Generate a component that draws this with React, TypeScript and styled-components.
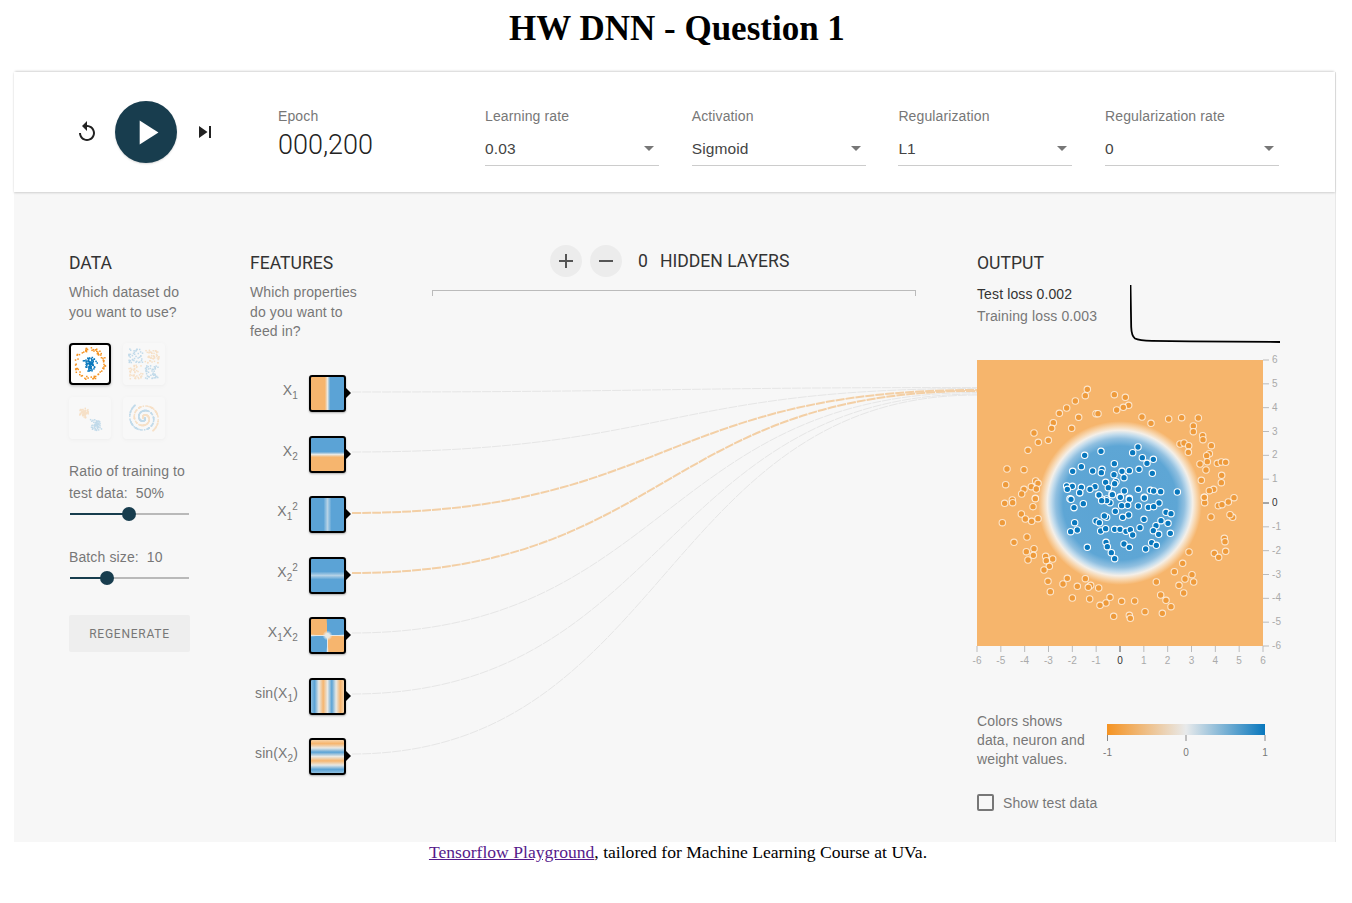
import React from "react";
import styled, { createGlobalStyle } from "styled-components";

const ORANGE = "#f6b56c";
const sans = `"Liberation Sans", Arial, sans-serif`;

const Global = createGlobalStyle`
  html, body { margin: 0; padding: 0; background: #fff; }
  body { font-family: "Liberation Serif", serif; color: #000; }
`;

const Page = styled.div`
  width: 1352px;
  height: 903px;
  overflow: hidden;
`;
const Title = styled.h1`
  margin: 0;
  height: 72px;
  box-sizing: border-box;
  padding: 9px 0 0 2px;
  text-align: center;
  font: bold 35px/40px "Liberation Serif", serif;
`;
const Panel = styled.div`
  position: relative;
  margin: 0 17px 0 14px;
  width: 1321px;
  height: 770px;
  background: #f7f7f7;
  border-right: 1px solid #e8e8e8;
  box-sizing: content-box;
  font-family: ${sans};
  letter-spacing: .12px;
`;
const TopBar = styled.header`
  height: 120px;
  box-sizing: border-box;
  background: #fff;
  box-shadow: 0 1px 2px rgba(0,0,0,.16), 0 -2px 2px -1px rgba(0,0,0,.16);
  display: flex;
  align-items: center;
  padding-left: 61px;
`;
const IconButton = styled.button`
  border: 0;
  background: none;
  padding: 0;
  width: 24px;
  height: 24px;
  display: flex;
  align-items: center;
  justify-content: center;
  color: #222;
`;
const PlayButton = styled.button`
  width: 62px;
  height: 62px;
  border: 0;
  padding: 0;
  margin: 0 16px;
  border-radius: 50%;
  background: #183d4e;
  display: flex;
  align-items: center;
  justify-content: center;
  box-shadow: 0 1px 2px rgba(0,0,0,.15);
`;
const EpochBlock = styled.div`
  margin-left: 61px;
  width: 207px;
  height: 64px;
  padding-top: 8px;
  box-sizing: border-box;
`;
const FieldLabel = styled.div`
  font-size: 14px;
  line-height: 16px;
  color: #777;
`;
const EpochValue = styled.div`
  font-family: Roboto, sans-serif;
  font-weight: 300;
  font-size: 27px;
  line-height: 30px;
  margin-top: 6px;
  color: #222;
  letter-spacing: 0;
`;
const Selects = styled.div`
  display: grid;
  grid-template-columns: repeat(4, 174px);
  column-gap: 32.7px;
`;
const Field = styled.div`
  height: 64px;
  padding-top: 8px;
  box-sizing: border-box;
`;
const SelectBox = styled.div`
  margin-top: 10px;
  height: 32px;
  border-bottom: 1px solid #ccc;
  display: flex;
  align-items: center;
  justify-content: space-between;
  font-size: 15.5px;
  color: #444;
  padding-bottom: 2px;
  box-sizing: border-box;
  &::after {
    content: "";
    margin-right: 5px;
    border-left: 5px solid transparent;
    border-right: 5px solid transparent;
    border-top: 5px solid #777;
  }
`;
const Main = styled.main`
  position: relative;
  height: 650px;
  box-sizing: border-box;
  padding: 60px 0 0 55px;
  display: grid;
  grid-template-columns: 181px 727px 303px;
  align-items: start;
`;
const Heading = styled.h4`
  margin: 0;
  font: 400 17.6px/22px Roboto, sans-serif;
  letter-spacing: 0;
  color: #333;
  text-transform: uppercase;
`;
const Help = styled.p`
  margin: 9px 0 0;
  font-size: 14px;
  line-height: 19.5px;
  color: #777;
`;
const DataCol = styled.section`
  display: flex;
  flex-direction: column;
  width: 121px;
`;
const Datasets = styled.div`
  margin-top: 21px;
  display: grid;
  grid-template-columns: 42px 42px;
  grid-auto-rows: 42px;
  column-gap: 12px;
  row-gap: 12px;
`;
const Thumb = styled.div<{ $selected?: boolean }>`
  box-sizing: border-box;
  border: 2px solid ${(p) => (p.$selected ? "#000" : "transparent")};
  border-radius: 4px;
  background: #fff;
  opacity: ${(p) => (p.$selected ? 1 : 0.22)};
  box-shadow: 0 1px 3px rgba(0,0,0,${(p) => (p.$selected ? 0.25 : 0.15)});
  svg { display: block; width: 100%; height: 100%; }
`;
const SliderLabel = styled.div<{ $top: number }>`
  margin-top: ${(p) => p.$top}px;
  font-size: 14px;
  line-height: 22px;
  color: #777;
  white-space: pre;
`;
const Track = styled.div`
  position: relative;
  margin: 9px 0 0 1px;
  width: 119px;
  height: 2px;
  background: #b9b9b9;
`;
const TrackFill = styled.div`
  position: absolute;
  left: 0;
  top: 0;
  height: 2px;
  background: #183d4e;
`;
const TrackThumb = styled.div`
  position: absolute;
  top: -6px;
  width: 14px;
  height: 14px;
  margin-left: -7px;
  border-radius: 50%;
  background: #183d4e;
`;
const Regenerate = styled.button`
  margin-top: 36px;
  width: 121px;
  height: 37px;
  border: 0;
  padding: 0;
  border-radius: 2px;
  background: #eeeeee;
  color: #777;
  font: 400 12px Roboto, sans-serif;
  letter-spacing: .75px;
  text-transform: uppercase;
`;
const NetCol = styled.section`
  display: grid;
  grid-template-columns: 181px 1fr;
  position: relative;
`;
const FeatureIntro = styled.div`
  width: 120px;
`;
const Layers = styled.div`
  display: flex;
  flex-direction: column;
  align-items: stretch;
`;
const LayerControls = styled.div`
  display: flex;
  align-items: center;
  height: 32px;
  margin: -7px 0 0 119px;
`;
const RoundButton = styled.button`
  width: 32px;
  height: 32px;
  margin-right: 8px;
  padding: 0;
  border: 0;
  border-radius: 50%;
  background: #ececec;
  color: #555;
  display: flex;
  align-items: center;
  justify-content: center;
`;
const LayerCount = styled.span`
  font: 400 17.6px/22px Roboto, sans-serif;
  letter-spacing: 0;
  color: #333;
  margin-left: 8px;
`;
const LayerText = styled.span`
  font: 400 17.6px/22px Roboto, sans-serif;
  letter-spacing: 0;
  color: #333;
  margin-left: 12px;
  white-space: nowrap;
`;
const Bracket = styled.div`
  margin: 13px 0 0 1px;
  width: 484px;
  height: 6px;
  box-sizing: border-box;
  border: 1px solid #bbb;
  border-bottom: 0;
`;
const Features = styled.div`
  grid-column: 1 / 3;
  margin-top: 33.5px;
  width: 100px;
  display: flex;
  flex-direction: column;
  position: relative;
  z-index: 1;
`;
const FeatureRow = styled.div`
  height: 60.5px;
  display: flex;
  align-items: flex-start;
`;
const FeatureLabel = styled.div`
  width: 48px;
  margin-right: 11px;
  height: 30px;
  text-align: right;
  font-size: 14px;
  line-height: 30px;
  color: #777;
  white-space: nowrap;
  direction: rtl;
  unicode-bidi: plaintext;
  sub, sup { font-size: 10px; line-height: 0; }
`;
const NodeBox = styled.div<{ $bg: string }>`
  position: relative;
  flex: none;
  width: 37px;
  height: 37px;
  box-sizing: border-box;
  border: 2px solid #000;
  border-radius: 3px;
  background: ${(p) => p.$bg};
  box-shadow: 0 1px 2px rgba(0,0,0,.3);
  &::after {
    content: "";
    position: absolute;
    right: -7px;
    top: 11px;
    border-left: 5px solid #000;
    border-top: 5px solid transparent;
    border-bottom: 5px solid transparent;
  }
`;
const Links = styled.svg`
  position: absolute;
  left: 0;
  top: 0;
  width: 1321px;
  height: 650px;
  pointer-events: none;
`;
const OutputCol = styled.section`
  position: relative;
  z-index: 2;
  width: 303px;
  display: flex;
  flex-direction: column;
`;
const LossRow = styled.div`
  display: flex;
  justify-content: space-between;
  height: 75px;
  margin-top: 1px;
`;
const LossText = styled.div<{ $muted?: boolean }>`
  font-size: 14px;
  line-height: 22px;
  color: ${(p) => (p.$muted ? "#777" : "#333")};
`;
const Losses = styled.div`
  padding-top: 8px;
`;
const LossChart = styled.svg`
  display: block;
  margin-top: 10px;
  width: 150px;
  height: 60px;
`;
const Plot = styled.svg`
  display: block;
  width: 303px;
  height: 320px;
  overflow: visible;
`;
const Legend = styled.div`
  margin-top: 42px;
  display: flex;
  align-items: flex-start;
`;
const LegendText = styled.div`
  width: 130px;
  font-size: 14px;
  line-height: 19px;
  color: #777;
`;
const LegendChart = styled.svg`
  display: block;
  margin-top: 12px;
  width: 173px;
  height: 50px;
  overflow: visible;
`;
const CheckRow = styled.label`
  display: flex;
  align-items: center;
  gap: 9px;
  margin-top: 20px;
  font-size: 14px;
  color: #777;
`;
const CheckBox = styled.span`
  width: 17px;
  height: 17px;
  box-sizing: border-box;
  border: 2px solid #777;
  border-radius: 2px;
`;
const Footer = styled.footer`
  height: 61px;
  text-align: center;
  padding: 0 0 0 4px;
  font: 17.6px/20px "Liberation Serif", serif;
  a { color: #551a8b; }
`;

const o5 = [[352,328],[346,347],[316,363],[290,384],[268,400],[250,428],[245,445],[326,412],[305,445],[378,401],[384,401],[433,344],[466,352],[476,376],[460,382],[440,390],[516,411],[543,430],[596,417],[635,413],[685,414],[670,438],[670,455],[698,467],[699,479],[724,497],[630,492],[642,489],[656,497],[655,517],[718,521],[710,527],[712,545],[690,552],[742,550],[754,546],[767,547],[708,570],[755,586],[754,608],[694,601],[731,628],[718,632],[703,652],[792,653],[192,459],[205,487],[235,481],[174,511],[111,567],[162,569],[107,614],[197,603],[204,610],[184,620],[199,627],[162,628],[155,642],[196,655],[127,660]];
const o6 = [[196,26],[104,40],[128,38],[189,50],[154,72],[166,87],[185,94],[204,86],[97,98],[171,141],[132,157],[192,176],[169,185],[190,196],[174,210],[227,199],[229,212],[248,207],[238,229],[222,240],[292,265],[279,282],[234,274],[322,289],[241,305],[346,266],[362,286],[355,292],[386,294],[307,324],[359,327],[420,322],[408,339],[390,346],[455,334],[494,333],[431,379],[478,376],[481,385],[525,365],[577,370],[559,276],[572,315],[588,331],[603,350],[627,286],[641,309],[645,267],[666,254],[671,276],[613,245],[638,220],[657,186],[733,190],[746,202],[767,184],[763,145],[765,155],[723,81],[788,82],[780,74],[704,38],[703,22],[745,47],[756,44],[775,36]];
const b5 = [[504,501],[488,518],[517,533],[550,538],[531,550],[393,514],[344,526],[433,551],[334,560],[308,574],[368,573],[396,568],[394,578],[432,584],[456,574],[478,572],[507,568],[462,593],[547,580],[407,607],[438,605],[434,611],[290,618],[307,619],[334,622],[292,628],[375,620],[360,628],[329,638],[415,623],[386,645],[426,643],[463,633],[505,628],[541,631],[551,633],[572,635],[622,636],[450,651],[478,655],[523,652],[300,656],[410,657],[395,657]];
const b6 = [[303,28],[312,53],[329,8],[340,41],[387,15],[420,38],[427,14],[410,32],[395,32],[451,22],[478,28],[523,24],[567,39],[535,52],[551,50],[505,48],[473,46],[455,47],[436,64],[476,75],[458,82],[410,82],[403,78],[378,93],[388,98],[522,88],[588,67],[603,71],[594,100],[573,92],[558,107],[314,98],[302,125],[322,120],[392,123],[407,116],[434,118],[450,118],[468,124],[481,119],[488,135],[510,113],[550,122],[601,130],[566,133],[352,172],[408,157],[412,170],[424,188],[434,206],[462,162],[478,172],[527,177],[545,158],[559,166]];

// pixel coordinates inside the plot svg (origin at page 977,350)
const from5 = (p: number[]) => [p[0] / 3 + 970 - 977, p[1] / 3 + 280 - 350];
const from6 = (p: number[]) => [p[0] / 3 + 970 - 977, p[1] / 3 + 490 - 350];
const orangeDots = [...o5.map(from5), ...o6.map(from6)];
const blueDots = [...b5.map(from5), ...b6.map(from6)];

const TICKS = [-6,-5,-4,-3,-2,-1,0,1,2,3,4,5,6];

function OutputPlot() {
  const size = 286;
  const top = 10;
  return (
    <Plot viewBox="0 0 303 320">
      <defs>
        <radialGradient id="disc" gradientUnits="userSpaceOnUse" cx={143} cy={top + 143} r={92}>
          <stop offset="0" stopColor="#5aa3d3" />
          <stop offset="0.62" stopColor="#5ea6d5" />
          <stop offset="0.7" stopColor="#8fbfe0" />
          <stop offset="0.75" stopColor="#c5dded" />
          <stop offset="0.79" stopColor="#f4efe8" />
          <stop offset="0.83" stopColor="#f8d9b4" />
          <stop offset="0.89" stopColor={ORANGE} />
          <stop offset="1" stopColor={ORANGE} />
        </radialGradient>
      </defs>
      <rect x={0} y={top} width={size} height={size} fill={ORANGE} />
      <circle cx={143} cy={top + 143} r={92} fill="url(#disc)" />
      {orangeDots.map(([x, y], i) => (
        <circle key={i} cx={x} cy={y} r={3.2} fill="#ee9a3a" stroke="#fff" strokeOpacity={0.7} strokeWidth={1.1} />
      ))}
      {blueDots.map(([x, y], i) => (
        <circle key={i} cx={x} cy={y} r={3.2} fill="#0877bd" stroke="#fff" strokeWidth={1.1} />
      ))}
      {TICKS.map((t) => {
        const d = ((t + 6) / 12) * size;
        const dark = t === 0;
        const c = dark ? "#555" : "#bbb";
        return (
          <g key={t} fontFamily={sans} fontSize={10} fill={dark ? "#333" : "#aaa"}>
            <line x1={d} x2={d} y1={top + size} y2={top + size + 6} stroke={c} />
            <text x={d} y={top + size + 18} textAnchor="middle">{t}</text>
            <line x1={size} x2={size + 6} y1={top + size - d} y2={top + size - d} stroke={c} />
            <text x={size + 9} y={top + size - d + 3}>{t}</text>
          </g>
        );
      })}
    </Plot>
  );
}

function seeded(seed: number) {
  let s = seed;
  return () => {
    s = (s * 16807) % 2147483647;
    return s / 2147483647;
  };
}

function datasetDots(kind: string) {
  const r = seeded(kind.length * 7919 + 13);
  const pts: { x: number; y: number; c: string }[] = [];
  const BL = "#0877bd";
  const OR = "#f59322";
  if (kind === "circle") {
    for (let i = 0; i < 70; i++) {
      const a = r() * 6.283;
      const d = 12.5 + r() * 3.8;
      pts.push({ x: 19 + Math.cos(a) * d, y: 19 + Math.sin(a) * d, c: OR });
    }
    for (let i = 0; i < 80; i++) {
      const a = r() * 6.283;
      const d = r() * 7.5;
      pts.push({ x: 19 + Math.cos(a) * d, y: 19 + Math.sin(a) * d, c: BL });
    }
  } else if (kind === "xor") {
    for (let i = 0; i < 200; i++) {
      const x = 4 + r() * 30;
      const y = 4 + r() * 30;
      if (Math.abs(x - 19) < 1.2 || Math.abs(y - 19) < 1.2) continue;
      pts.push({ x, y, c: (x - 19) * (y - 19) < 0 ? OR : BL });
    }
  } else if (kind === "gauss") {
    for (let i = 0; i < 60; i++) {
      pts.push({ x: 13 + (r() + r() - 1) * 5, y: 14 + (r() + r() - 1) * 6, c: OR });
      pts.push({ x: 25 + (r() + r() - 1) * 6, y: 26 + (r() + r() - 1) * 6, c: BL });
    }
  } else {
    for (let i = 0; i < 160; i++) {
      const t = r() * 10.5;
      const d = t * 1.45 + 0.5;
      pts.push({ x: 19 + Math.cos(t) * d, y: 19 + Math.sin(t) * d, c: BL });
      pts.push({ x: 19 - Math.cos(t) * d, y: 19 - Math.sin(t) * d, c: OR });
    }
  }
  return pts;
}

function DatasetThumb({ kind, selected }: { kind: string; selected?: boolean }) {
  return (
    <Thumb $selected={selected}>
      <svg viewBox="0 0 38 38">
        {datasetDots(kind).map((p, i) => (
          <rect key={i} x={p.x - 0.75} y={p.y - 0.75} width={1.5} height={1.5} fill={p.c} />
        ))}
      </svg>
    </Thumb>
  );
}

const O = "#f6b56e";
const B = "#5ba3d6";
const W = "#e8e8e4";

const FEATURES: { label: React.ReactNode; bg: string }[] = [
  { label: <>X<sub>1</sub></>, bg: `linear-gradient(90deg, ${O} 42%, ${W} 50%, ${B} 58%)` },
  { label: <>X<sub>2</sub></>, bg: `linear-gradient(180deg, ${B} 42%, ${W} 50%, ${O} 58%)` },
  { label: <>X<sub>1</sub><sup>2</sup></>, bg: `linear-gradient(90deg, ${B} 38%, #b5d2e6 50%, ${B} 62%)` },
  { label: <>X<sub>2</sub><sup>2</sup></>, bg: `linear-gradient(180deg, ${B} 38%, #b5d2e6 50%, ${B} 62%)` },
  {
    label: <>X<sub>1</sub>X<sub>2</sub></>,
    bg: `radial-gradient(circle at 50% 50%, ${W} 0 2px, transparent 5px), conic-gradient(${B} 0 85deg, ${W} 90deg, ${O} 95deg 175deg, ${W} 180deg, ${B} 185deg 265deg, ${W} 270deg, ${O} 275deg 355deg, ${B} 360deg)`,
  },
  { label: <>sin(X<sub>1</sub>)</>, bg: `linear-gradient(90deg, #8fbfdf 0%, ${B} 11%, ${W} 24%, ${O} 37%, ${W} 50%, ${B} 63%, ${W} 76%, ${O} 89%, #f7d3a8 100%)` },
  { label: <>sin(X<sub>2</sub>)</>, bg: `linear-gradient(180deg, #f7d3a8 0%, ${O} 11%, ${W} 24%, ${B} 37%, ${W} 50%, ${O} 63%, ${W} 76%, ${B} 89%, #8fbfdf 100%)` },
];

// link geometry is page coordinates less the Main origin (14,192)
const LINK_Y = [392, 452, 513, 573, 633, 694, 754];
const END_Y = [387.5, 388.5, 390, 391, 392.5, 394, 395];

function NetworkLinks() {
  return (
    <Links viewBox="0 0 1321 650">
      {LINK_Y.map((y, i) => {
        const x0 = 338;
        const y0 = y - 192;
        const x1 = 963;
        const y1 = END_Y[i] - 192;
        const m = (x0 + x1) / 2;
        const strong = i === 2 || i === 3;
        return (
          <path
            key={i}
            d={`M${x0} ${y0}C${m} ${y0} ${m} ${y1} ${x1} ${y1}`}
            fill="none"
            stroke={strong ? "#f3cfa5" : "#e6e6e6"}
            strokeWidth={strong ? 2 : 1}
            strokeDasharray="9 1"
          />
        );
      })}
    </Links>
  );
}

export default function App() {
  return (
    <Page>
      <Global />
      <Title>HW DNN - Question 1</Title>
      <Panel>
        <TopBar>
          <IconButton aria-label="Reset">
            <svg width="24" height="24" viewBox="0 0 24 24" fill="currentColor">
              <path d="M12 5V1L7 6l5 5V7c3.31 0 6 2.69 6 6s-2.69 6-6 6-6-2.69-6-6H4c0 4.42 3.58 8 8 8s8-3.58 8-8-3.58-8-8-8z" />
            </svg>
          </IconButton>
          <PlayButton aria-label="Play">
            <svg width="41" height="41" viewBox="0 0 24 24" fill="#fff">
              <path d="M8 5v14l11-7z" />
            </svg>
          </PlayButton>
          <IconButton aria-label="Step">
            <svg width="24" height="24" viewBox="0 0 24 24" fill="currentColor">
              <path d="M6 18l8.5-6L6 6v12zM16 6v12h2V6h-2z" />
            </svg>
          </IconButton>
          <EpochBlock>
            <FieldLabel>Epoch</FieldLabel>
            <EpochValue>000,200</EpochValue>
          </EpochBlock>
          <Selects>
            {[["Learning rate", "0.03"], ["Activation", "Sigmoid"], ["Regularization", "L1"], ["Regularization rate", "0"]].map(([l, v]) => (
              <Field key={l}>
                <FieldLabel>{l}</FieldLabel>
                <SelectBox>{v}</SelectBox>
              </Field>
            ))}
          </Selects>
        </TopBar>
        <Main>
          <NetworkLinks />
          <DataCol>
            <Heading>Data</Heading>
            <Help>Which dataset do<br />you want to use?</Help>
            <Datasets>
              <DatasetThumb kind="circle" selected />
              <DatasetThumb kind="xor" />
              <DatasetThumb kind="gauss" />
              <DatasetThumb kind="spiral" />
            </Datasets>
            <SliderLabel $top={21}>{"Ratio of training to\ntest data:  50%"}</SliderLabel>
            <Track>
              <TrackFill style={{ width: 59 }} />
              <TrackThumb style={{ left: 59 }} />
            </Track>
            <SliderLabel $top={31}>Batch size:  10</SliderLabel>
            <Track>
              <TrackFill style={{ width: 37 }} />
              <TrackThumb style={{ left: 37 }} />
            </Track>
            <Regenerate>Regenerate</Regenerate>
          </DataCol>
          <NetCol>
            <FeatureIntro>
              <Heading>Features</Heading>
              <Help>Which properties<br />do you want to<br />feed in?</Help>
            </FeatureIntro>
            <Layers>
              <LayerControls>
                <RoundButton aria-label="Add layer">
                  <svg width="24" height="24" viewBox="0 0 24 24" fill="currentColor"><path d="M19 13h-6v6h-2v-6H5v-2h6V5h2v6h6v2z" /></svg>
                </RoundButton>
                <RoundButton aria-label="Remove layer">
                  <svg width="24" height="24" viewBox="0 0 24 24" fill="currentColor"><path d="M19 13H5v-2h14v2z" /></svg>
                </RoundButton>
                <LayerCount>0</LayerCount>
                <LayerText>HIDDEN LAYERS</LayerText>
              </LayerControls>
              <Bracket />
            </Layers>
            <Features>
              {FEATURES.map((f, i) => (
                <FeatureRow key={i}>
                  <FeatureLabel>{f.label}</FeatureLabel>
                  <NodeBox $bg={f.bg} />
                </FeatureRow>
              ))}
            </Features>
          </NetCol>
          <OutputCol>
            <Heading>Output</Heading>
            <LossRow>
              <Losses>
                <LossText>Test loss 0.002</LossText>
                <LossText $muted>Training loss 0.003</LossText>
              </Losses>
              <LossChart viewBox="0 0 150 60">
                <path d="M0.5 0 L1.2 42 Q1.5 51 5 53.5 Q9 55.5 22 55.8 L60 56.4 L150 57" fill="none" stroke="#000" strokeWidth="1.8" />
              </LossChart>
            </LossRow>
            <OutputPlot />
            <Legend>
              <LegendText>Colors shows<br />data, neuron and<br />weight values.</LegendText>
              <LegendChart viewBox="0 0 173 50">
                <defs>
                  <linearGradient id="legend">
                    <stop offset="0" stopColor="#f59322" />
                    <stop offset="0.5" stopColor="#e8eaeb" />
                    <stop offset="1" stopColor="#0877bd" />
                  </linearGradient>
                </defs>
                <rect x="0" y="0" width="158" height="11" fill="url(#legend)" />
                {([[0.5, "-1"], [79, "0"], [158, "1"]] as [number, string][]).map(([x, t]) => (
                  <g key={t}>
                    <line x1={x} x2={x} y1={11} y2={17} stroke="#888" />
                    <text x={x} y={32} textAnchor="middle" fontSize="10" fill="#777" fontFamily={sans}>{t}</text>
                  </g>
                ))}
              </LegendChart>
            </Legend>
            <CheckRow>
              <CheckBox />
              Show test data
            </CheckRow>
          </OutputCol>
        </Main>
      </Panel>
      <Footer>
        <a href="#">Tensorflow Playground</a>, tailored for Machine Learning Course at UVa.
      </Footer>
    </Page>
  );
}
